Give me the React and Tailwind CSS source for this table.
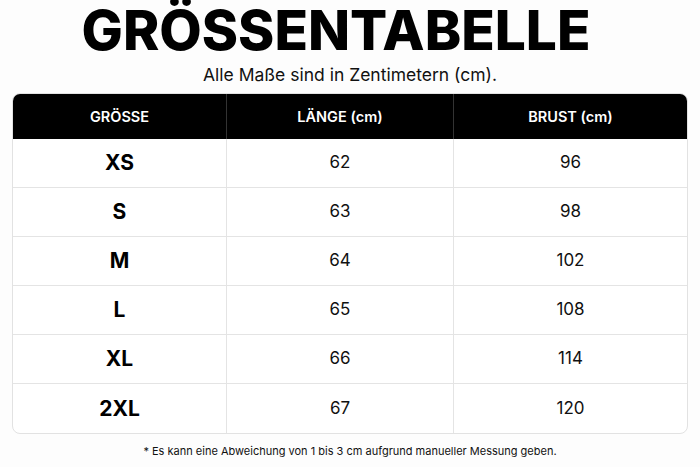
const rows = [
  ["XS", "62", "96"],
  ["S", "63", "98"],
  ["M", "64", "102"],
  ["L", "65", "108"],
  ["XL", "66", "114"],
  ["2XL", "67", "120"],
];

export default function App() {
  return (
    <div className="w-[700px] h-[467px] bg-[#fdfdfd] flex flex-col items-center overflow-hidden" style={{ fontFamily: "Inter, 'Noto Sans', sans-serif" }}>
      <h1 className="text-[55px] leading-[60px] font-extrabold text-black mr-[28px]">GRÖSSENTABELLE</h1>
      <p className="text-[17.5px] leading-5 text-[#111] mt-[5px]">Alle Maße sind in Zentimetern (cm).</p>
      <div className="mt-[8px] w-[676px] rounded-lg border border-[#e2e2e2] overflow-hidden bg-white">
        <div className="flex h-[45px] bg-black text-white text-[14.5px] font-semibold">
          <div className="w-[214px] flex items-center justify-center border-r border-[#333]">GRÖSSE</div>
          <div className="w-[227px] flex items-center justify-center border-r border-[#333]">LÄNGE (cm)</div>
          <div className="flex-1 flex items-center justify-center">BRUST (cm)</div>
        </div>
        {rows.map((r, i) => (
          <div key={r[0]} className={"flex h-[49px] " + (i < rows.length - 1 ? "border-b border-[#e4e4e4]" : "")}>
            <div className="w-[214px] flex items-center justify-center border-r border-[#e4e4e4] text-[21px] font-bold text-black">{r[0]}</div>
            <div className="w-[227px] flex items-center justify-center border-r border-[#e4e4e4] text-[17px] text-[#111]">{r[1]}</div>
            <div className="flex-1 flex items-center justify-center text-[17px] text-[#111]">{r[2]}</div>
          </div>
        ))}
      </div>
      <p className="mt-[9px] text-[11px] text-[#111]">* Es kann eine Abweichung von 1 bis 3 cm aufgrund manueller Messung geben.</p>
    </div>
  );
}
